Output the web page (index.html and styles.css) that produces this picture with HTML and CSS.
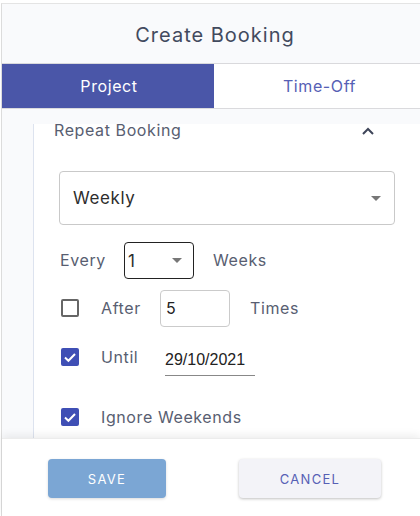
FILE: index.html
```html
<!DOCTYPE html>
<html>
<head>
<meta charset="utf-8">
<link rel="stylesheet" href="styles.css">
</head>
<body>
<div class="dialog">
  <div class="header">Create Booking</div>
  <div class="tabs">
    <div class="tab active">Project</div>
    <div class="tab other">Time-Off</div>
  </div>
  <div class="content">
    <div class="panel">
      <div class="acc-head">
        <span class="acc-title">Repeat Booking</span>
        <svg class="chev" width="12" height="8" viewBox="0 0 12 8"><path d="M1 7 L6 2 L11 7" fill="none" stroke="#3e4559" stroke-width="2"/></svg>
      </div>
      <div class="select">
        <span>Weekly</span>
        <span class="tri"></span>
      </div>
      <div class="row row-every">
        <span class="lbl-every">Every</span>
        <div class="small-select"><span>1</span><span class="tri"></span></div>
        <span class="after-lbl">Weeks</span>
      </div>
      <div class="row row-after">
        <span class="cb"></span>
        <span class="lbl">After</span>
        <div class="num-input">5</div>
        <span class="after-lbl">Times</span>
      </div>
      <div class="row row-until">
        <span class="cb checked"><svg width="18" height="18" viewBox="0 0 18 18"><path d="M4 9.6 L7.4 12.8 L14 6" fill="none" stroke="#fff" stroke-width="2"/></svg></span>
        <span class="lbl">Until</span>
        <div class="date">29/10/2021</div>
      </div>
      <div class="row row-ignore">
        <span class="cb checked"><svg width="18" height="18" viewBox="0 0 18 18"><path d="M4 9.6 L7.4 12.8 L14 6" fill="none" stroke="#fff" stroke-width="2"/></svg></span>
        <span class="lbl">Ignore Weekends</span>
      </div>
    </div>
  </div>
  <div class="footer">
    <button class="btn save">SAVE</button>
    <button class="btn cancel">CANCEL</button>
  </div>
</div>
</body>
</html>
```
FILE: styles.css
```css
* { box-sizing: border-box; }
html, body { margin: 0; padding: 0; background: #fff; }
body {
  padding-top: 3px;
  font-family: "Inter", "DejaVu Sans", sans-serif;
  letter-spacing: 0.6px;
  width: 420px;
  height: 516px;
  overflow: hidden;
}
.dialog {
  margin-left: 1px;
  border-left: 1px solid #dcdcdc;
  border-top: 1px solid #e4e4e4;
  height: 513px;
  display: flex;
  flex-direction: column;
}
.header {
  height: 60px;
  background: #f9fafc;
  border-bottom: 1px solid #d9d9dc;
  display: flex;
  align-items: center;
  justify-content: center;
  font-size: 20px;
  letter-spacing: 1px;
  color: #424a5e;
  padding-top: 2px;
  padding-left: 8px;
}
.tabs {
  display: grid;
  grid-template-columns: 212px 1fr;
  height: 45px;
  border-bottom: 1px solid #dadadd;
}
.tab {
  display: flex;
  align-items: center;
  justify-content: center;
  font-size: 16px;
  color: #5660b5;
  background: #fff;
}
.tab.other { padding-left: 5px; }
.tab.active {
  background: #4a56a8;
  color: #fff;
  padding-left: 2px;
}
.content {
  background: #f9fafc;
  padding-top: 15px;
  height: 329px;
  display: flex;
}
.panel {
  margin-left: 31px;
  flex: 1;
  background: #fff;
  border-left: 1px solid #dde3ef;
  padding-left: 20px;
}
.acc-head {
  height: 12px;
  display: flex;
  align-items: center;
  justify-content: space-between;
  padding-right: 46px;
}
.acc-title {
  font-size: 16px;
  line-height: 12px;
  color: #585e71;
  white-space: nowrap;
}
.chev { margin-top: 2px; }
.select {
  margin-top: 35px;
  margin-left: 5px;
  width: 336px;
  height: 54px;
  border: 1px solid #c9c9c9;
  border-radius: 4px;
  display: flex;
  align-items: center;
  justify-content: space-between;
  padding: 0 13px 0 13px;
  font-size: 17px;
  color: #2d2d2d;
}
.tri {
  width: 0;
  height: 0;
  border-left: 5px solid transparent;
  border-right: 5px solid transparent;
  border-top: 5px solid #777;
}
.row {
  display: flex;
  align-items: center;
  height: 38px;
  margin-left: 6px;
  font-size: 16px;
  color: #585e71;
}
.row-every { margin-top: 17px; height: 37px; }
.row-after { margin-top: 10px; }
.row-until { margin-top: 11px; }
.row-ignore { margin-top: 22px; }
.lbl-every { width: 64px; padding-bottom: 2px; }
.row-every .after-lbl { padding-bottom: 2px; margin-left: 19px; }
.small-select {
  width: 70px;
  height: 37px;
  border: 1px solid #222;
  border-radius: 4px;
  display: flex;
  align-items: center;
  justify-content: space-between;
  padding: 0 11px 0 3px;
  color: #2d2d2d;
  font-size: 17px;
}
.after-lbl { margin-left: 20px; }
.cb {
  width: 18px;
  height: 18px;
  margin-left: 1px;
  border: 2px solid #666;
  border-radius: 2px;
  flex: none;
}
.cb.checked {
  border: none;
  background: #3f4fb5;
}
.cb svg { display: block; }
.lbl { margin-left: 22px; }
.row-after .lbl { width: 59px; }
.num-input {
  width: 70px;
  height: 37px;
  border: 1px solid #cbcbcb;
  border-radius: 4px;
  display: flex;
  align-items: center;
  padding-left: 5px;
  color: #222;
  font-size: 16px;
}
.row-until .lbl { width: 64px; }
.date {
  width: 90px;
  height: 32px;
  margin-top: 6px;
  border-bottom: 1px solid #888;
  display: flex;
  align-items: center;
  color: #222;
  font-size: 16px;
  letter-spacing: 0;
  font-family: "Liberation Sans", "Inter", sans-serif;
}
.footer {
  flex: 1;
  background: #fff;
  box-shadow: 0 -3px 8px rgba(0,0,0,0.07);
  border-top: 1px solid #ececec;
  position: relative;
  display: flex;
  align-items: flex-start;
  padding-top: 20px;
  padding-left: 46px;
}
.btn {
  height: 39px;
  border: none;
  border-radius: 4px;
  font-family: "Inter", "DejaVu Sans", sans-serif;
  font-size: 13px;
  letter-spacing: 1.3px;
  cursor: pointer;
}
.save {
  width: 118px;
  background: #7ba6d4;
  color: #fff;
  box-shadow: 0 1px 3px rgba(0,0,0,0.15);
}
.cancel {
  margin-left: 73px;
  width: 142px;
  background: #f3f3f8;
  color: #5660b5;
  box-shadow: 0 1px 3px rgba(0,0,0,0.25);
}
```
